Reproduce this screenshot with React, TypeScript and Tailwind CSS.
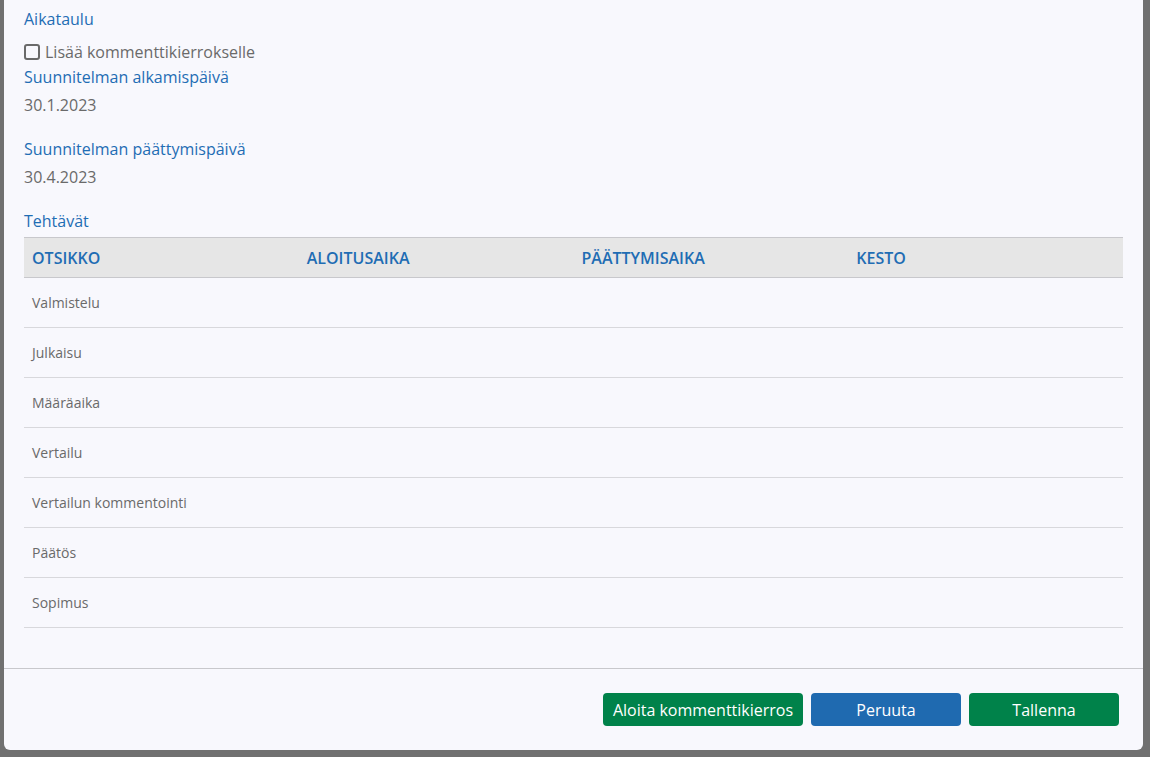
const tasks = [
  'Valmistelu',
  'Julkaisu',
  'Määräaika',
  'Vertailu',
  'Vertailun kommentointi',
  'Päätös',
  'Sopimus'
]

const columns = ['OTSIKKO', 'ALOITUSAIKA', 'PÄÄTTYMISAIKA', 'KESTO']

function Field({ label, value }: { label: string; value: string }): JSX.Element {
  return (
    <div className="flex flex-col gap-1">
      <div className="text-[#1f6db4] leading-6">{label}</div>
      <div className="text-[#6a6a6a] leading-6">{value}</div>
    </div>
  )
}

function TaskTable(): JSX.Element {
  return (
    <table className="w-full border-collapse table-fixed">
      <thead>
        <tr className="bg-[#e6e6e6] border-t border-b border-[#c8c8cc]">
          {columns.map((c) => (
            <th key={c} className="h-[40px] px-2 pt-px text-left font-semibold text-[#1f6db4]">
              {c}
            </th>
          ))}
        </tr>
      </thead>
      <tbody>
        {tasks.map((t) => (
          <tr key={t} className="border-b border-[#d8d8dc]">
            <td className="h-[50px] px-2 text-sm text-[#6a6a6a]">{t}</td>
            <td />
            <td />
            <td />
          </tr>
        ))}
      </tbody>
    </table>
  )
}

function App(): JSX.Element {
  return (
    <div
      className="h-[757px] bg-[#707070] flex pl-[4px] pr-[7px] pb-[7px]"
      style={{ fontFamily: '"Open Sans", "Liberation Sans", sans-serif' }}
    >
      <div className="flex-1 flex flex-col bg-[#f8f8fd] rounded-b-md">
        <div className="flex-1 px-5 pt-[7px]">
          <div className="text-[#1f6db4] leading-6">Aikataulu</div>
          <label className="mt-[9px] flex items-center gap-[5px] text-[#6a6a6a] leading-6">
            <span className="w-[16px] h-[16px] border-2 border-[#6a6a6a] rounded-[3px]" />
            Lisää kommenttikierrokselle
          </label>
          <div className="mt-[1px] flex flex-col gap-5">
            <Field label="Suunnitelman alkamispäivä" value="30.1.2023" />
            <Field label="Suunnitelman päättymispäivä" value="30.4.2023" />
          </div>
          <div className="mt-5 text-[#1f6db4] leading-6">Tehtävät</div>
          <div className="mt-1">
            <TaskTable />
          </div>
        </div>
        <div className="border-t border-[#c8c8cc] px-6 py-6 flex justify-end gap-2">
          <button className="w-[200px] h-[33px] rounded bg-[#00824a] text-white">
            Aloita kommenttikierros
          </button>
          <button className="w-[150px] h-[33px] rounded bg-[#1f6ab0] text-white">Peruuta</button>
          <button className="w-[150px] h-[33px] rounded bg-[#00824a] text-white">Tallenna</button>
        </div>
      </div>
    </div>
  )
}

export default App
